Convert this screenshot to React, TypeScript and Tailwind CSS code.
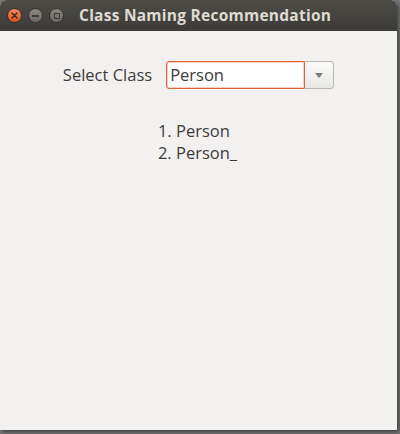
import React from "react";

export default function App() {
  return (
    <div className="w-[400px] h-[434px] bg-[#7a7a7a] relative overflow-hidden" style={{ fontFamily: '"Open Sans", "Noto Sans", sans-serif' }}>
      <div className="w-[397px] h-[430px] flex flex-col bg-[#f2f1f0] rounded-t-[6px] overflow-hidden shadow-[2px_2px_4px_rgba(0,0,0,0.5)]">
        <div className="h-[31px] shrink-0 flex items-center bg-gradient-to-b from-[#4e4c47] to-[#3c3b37] pl-[7px]">
          <div className="flex items-center gap-[6px]">
            <div className="w-[15px] h-[15px] rounded-full bg-gradient-to-b from-[#f28a5c] to-[#e4501d] border border-[#3a2a22] flex items-center justify-center">
              <svg width="7" height="7" viewBox="0 0 7 7"><path d="M1 1L6 6M6 1L1 6" stroke="#3c2a22" strokeWidth="1.5" strokeLinecap="round" /></svg>
            </div>
            <div className="w-[15px] h-[15px] rounded-full bg-gradient-to-b from-[#8a8883] to-[#6a6964] border border-[#34332f] flex items-center justify-center">
              <div className="w-[7px] h-[2px] bg-[#3c3b37]" />
            </div>
            <div className="w-[15px] h-[15px] rounded-full bg-gradient-to-b from-[#8a8883] to-[#6a6964] border border-[#34332f] flex items-center justify-center">
              <div className="w-[6px] h-[6px] border border-[#3c3b37]" />
            </div>
          </div>
          <div className="ml-[15px] text-[#dfdbd2] font-bold text-[15.5px] leading-none tracking-[0.25px]">Class Naming Recommendation</div>
        </div>
        <div className="flex flex-col items-center pt-[30px]">
          <div className="flex items-center">
            <span className="text-[16.5px] text-[#3c3c3c] mr-[14px]">Select Class</span>
            <div className="w-[139px] h-[28px] border border-[#e0643a] rounded-l-[3px] bg-white flex items-center pl-[3px] shadow-[inset_0_0_0_1px_rgba(224,100,58,0.3)]">
              <span className="text-[16.5px] text-[#3c3c3c]">Person</span>
            </div>
            <div className="w-[29px] h-[28px] border border-[#b9b6b1] border-l-0 rounded-r-[4px] bg-gradient-to-b from-[#fbfbfa] to-[#e8e7e5] flex items-center justify-center">
              <svg width="8" height="5" viewBox="0 0 8 5"><path d="M0 0H8L4 5Z" fill="#7d7b78" /></svg>
            </div>
          </div>
          <div className="mt-[31px] flex flex-col text-[16.5px] text-[#3c3c3c] leading-[22px] pr-[2px]">
            <span>1. Person</span>
            <span>2. Person_</span>
          </div>
        </div>
      </div>
    </div>
  );
}
